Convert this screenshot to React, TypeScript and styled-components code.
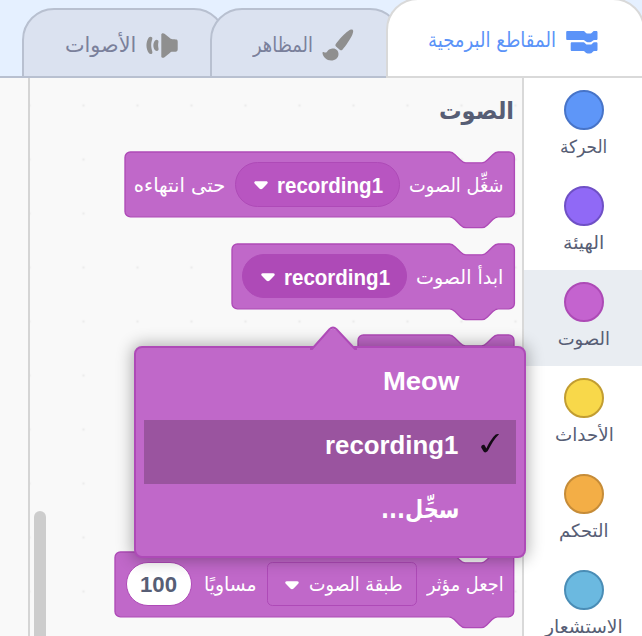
import React, { useLayoutEffect, useRef, useState } from "react";
import styled, { createGlobalStyle, css } from "styled-components";

const sans = `"Liberation Sans", "DejaVu Sans", sans-serif`;
const arabic = `"DejaVu Sans", "Liberation Sans", sans-serif`;

const GlobalStyle = createGlobalStyle`
  * { box-sizing: border-box; }
  body { margin: 0; overflow: hidden; background: #fff; font-family: ${sans}; }
`;

/* Text that is condensed or stretched to a known width */

const FitBox = styled.span<{ $w: number; $h: number; $dy: number }>`
  display: flex;
  justify-content: flex-start;
  flex: none;
  width: ${(p) => p.$w}px;
  height: ${(p) => p.$h}px;
  margin-top: ${(p) => p.$dy}px;
  overflow: visible;
`;

const FitInner = styled.span<{ $size: number; $bold?: boolean; $h: number; $latin?: boolean }>`
  flex: none;
  white-space: nowrap;
  font-family: ${(p) => (p.$latin ? sans : arabic)};
  font-size: ${(p) => p.$size}px;
  font-weight: ${(p) => (p.$bold ? 700 : 400)};
  line-height: ${(p) => p.$h}px;
  transform-origin: right center;
`;

type FitProps = {
  children: string;
  w: number;
  size: number;
  h?: number;
  dy?: number;
  bold?: boolean;
  latin?: boolean;
};

function Fit({ children, w, size, h = 30, dy = 0, bold, latin }: FitProps) {
  const ref = useRef<HTMLSpanElement>(null);
  const [scale, setScale] = useState(1);
  useLayoutEffect(() => {
    if (ref.current) setScale(w / ref.current.offsetWidth);
  }, [w, children, size]);
  return (
    <FitBox $w={w} $h={h} $dy={dy}>
      <FitInner
        ref={ref}
        dir={latin ? "ltr" : "rtl"}
        $size={size}
        $bold={bold}
        $h={h}
        $latin={latin}
        style={{ transform: `scaleX(${scale})` }}
      >
        {children}
      </FitInner>
    </FitBox>
  );
}

/* Page */

const Page = styled.div`
  direction: rtl;
  position: relative;
  display: flex;
  flex-direction: column;
  width: 642px;
  height: 636px;
  overflow: hidden;
`;

const TabBar = styled.header`
  display: flex;
  flex: none;
  align-items: flex-end;
  height: 78px;
  background: #e5f0ff;
  box-shadow: inset 0 -2px #b8c0d0;
`;

const Tab = styled.div<{ $w: number; $active?: boolean; $z: number; $start: number }>`
  position: relative;
  z-index: ${(p) => p.$z};
  display: flex;
  flex: none;
  align-items: center;
  width: ${(p) => p.$w}px;
  height: 70px;
  padding-top: 4px;
  padding-right: ${(p) => p.$start}px;
  margin-left: -16px;
  border: 2px solid #b8c0d0;
  border-radius: 32px 32px 0 0;
  background: #dbe2f0;
  color: #7a809b;
  ${(p) =>
    p.$active &&
    css`
      height: 80px;
      margin-right: -3px;
      padding-top: 8px;
      border-color: #d9d9d9;
      background: #fff;
      color: #5b93f8;
    `}
`;

const TabIcon = styled.svg`
  flex: none;
  display: block;
  overflow: visible;
`;

const Space = styled.span<{ $w: number }>`
  flex: none;
  width: ${(p) => p.$w}px;
`;

const Main = styled.main`
  display: flex;
  flex: 1;
  min-height: 0;
`;

const Categories = styled.nav`
  flex: none;
  width: 120px;
  border-left: 2px solid #d9d9d9;
  background: #fff;
`;

const Category = styled.div<{ $selected?: boolean }>`
  display: flex;
  flex-direction: column;
  align-items: center;
  height: 96px;
  padding: 12px 0 0 2px;
  background: ${(p) => (p.$selected ? "#e9edf2" : "transparent")};
  color: #575e75;
`;

const Bubble = styled.span<{ $fill: string; $line: string }>`
  flex: none;
  width: 40px;
  height: 40px;
  border: 2px solid ${(p) => p.$line};
  border-radius: 50%;
  background: ${(p) => p.$fill};
`;

const Flyout = styled.section`
  display: flex;
  flex-direction: column;
  flex: none;
  width: 494px;
  padding: 15px 8px 0 0;
  border-left: 2px solid #d5d5d5;
  color: #575e75;
  background: radial-gradient(circle at center, #ededed 0.8px, transparent 1.8px) 26.5px 0.5px / 54px 54px #f9f9f9;
`;

const Workspace = styled.section`
  flex: 1;
  background: #f9f9f9;
`;

/* Blocks */

const BlockBox = styled.div<{ $w: number; $gap: number }>`
  position: relative;
  display: flex;
  flex: none;
  align-items: center;
  width: ${(p) => p.$w}px;
  height: 64.8px;
  margin-top: ${(p) => p.$gap}px;
  padding-right: 10.5px;
  gap: 10px;
  color: #fff;
`;

const BlockShape = styled.svg`
  position: absolute;
  inset: 0;
  width: 100%;
  height: 100%;
  overflow: visible;
`;

const UNIT = 1.35;

function blockPath(width: number) {
  return (
    `M0,4 A4,4 0 0 1 4,0 H12 c2,0 3,1 4,2 l4,4 c1,1 2,2 4,2 h12 c2,0 3,-1 4,-2 l4,-4 c1,-1 2,-2 4,-2 ` +
    `H${width - 4} a4,4 0 0 1 4,4 v40 a4,4 0 0 1 -4,4 H48 ` +
    `c-2,0 -3,1 -4,2 l-4,4 c-1,1 -2,2 -4,2 h-12 c-2,0 -3,-1 -4,-2 l-4,-4 c-1,-1 -2,-2 -4,-2 H4 a4,4 0 0 1 -4,-4 z`
  );
}

function Block({ w, gap, children }: { w: number; gap: number; children?: React.ReactNode }) {
  return (
    <BlockBox $w={w} $gap={gap}>
      <BlockShape>
        <path
          transform={`translate(${w},0) scale(${-UNIT},${UNIT})`}
          d={blockPath(w / UNIT)}
          fill="#c068c9"
          stroke="#ae4ab7"
          strokeWidth="1"
        />
      </BlockShape>
      {children}
    </BlockBox>
  );
}

const Field = styled.span<{ $w: number; $kind: "round" | "open" | "square" | "number" }>`
  position: relative;
  display: flex;
  flex: none;
  align-items: center;
  gap: 10px;
  width: ${(p) => p.$w}px;
  height: 44.6px;
  padding-right: ${(p) => (p.$kind === "square" ? 13 : 15)}px;
  border: 1.35px solid #ae4ab7;
  border-radius: ${(p) => (p.$kind === "square" ? 5.4 : 23)}px;
  background: ${(p) =>
    ({ round: "#b855c1", open: "#ae4ab7", square: "transparent", number: "#fff" })[p.$kind]};
  ${(p) =>
    p.$kind === "number" &&
    css`
      margin-right: 2px;
      padding-right: 13px;
      color: #575e75;
    `}
`;

const Label = styled.span`
  position: relative;
  flex: none;
`;

const Caret = styled(TabIcon)`
  margin-top: 3px;
`;

const Arrow = () => (
  <Caret width="14" height="9" viewBox="0 0 14 9">
    <path d="M1.9 .3H12.1C13.7 .3 14.3 1.7 13.2 2.8L8.6 7.6C7.6 8.6 6.4 8.6 5.4 7.6L.8 2.8C-.3 1.7 .3 .3 1.9 .3Z" fill="#fff" />
  </Caret>
);

/* Drop-down menu */

const Popup = styled.div`
  position: absolute;
  left: 134px;
  top: 346px;
  width: 392px;
  height: 212px;
  padding: 8px;
  border: 2px solid #ae4ab7;
  border-radius: 8px;
  background: #c068c9;
  box-shadow: 0 0 16px 2px rgba(0, 0, 0, 0.3);
  color: #fff;
`;

const PopupTip = styled.svg`
  position: absolute;
  left: 174px;
  top: -22px;
`;

const Option = styled.div<{ $checked?: boolean }>`
  display: flex;
  height: 64px;
  padding: 10px 16px 0 0;
  background: ${(p) => (p.$checked ? "#9a549f" : "transparent")};
`;

const CheckSlot = styled.span`
  flex: none;
  width: 41px;
  height: 30px;
  padding-top: 3px;
`;

const Scrollbar = styled.div`
  position: absolute;
  left: 34px;
  top: 511px;
  width: 12px;
  height: 140px;
  border-radius: 6px;
  background: #cdcdcd;
`;

const categories = [
  { name: "الحركة", w: 47, fill: "#5e96f8", line: "#4774c8" },
  { name: "الهيئة", w: 41, fill: "#9069f6", line: "#6f50c6" },
  { name: "الصوت", w: 52, fill: "#c463cf", line: "#ad4ab6", selected: true },
  { name: "الأحداث", w: 59, fill: "#f8d84a", line: "#c29d31" },
  { name: "التحكم", w: 49, fill: "#f3ae46", line: "#c68c38" },
  { name: "الاستشعار", w: 78, fill: "#6bb9e0", line: "#4a8db6" },
];

export default function App() {
  return (
    <Page>
      <GlobalStyle />
      <TabBar>
        <Tab $w={259} $active $z={3} $start={45}>
          <TabIcon width="32" height="23" viewBox="0 0 32 23">
            <path
              fill="#5b93f8"
              d="M1.5 0H17c1 0 1.600.5 2.300 1.200 1 1 1.400 1.300 2.300 1.300h2.500c1 0 1.400-.4 2.300-1.300C27 .5 27.600 0 28.500 0h1.700c.8 0 1.300.5 1.300 1.300v6.400c0 .8-.5 1.300-1.300 1.300h-1.700c-.9 0-1.400.4-2.100 1.100-.8.800-1.300 1.100-2.300 1.100h-2.500c-1 0-1.500-.3-2.300-1.100C18.600 9.400 18 9 17 9H1.500C.6 9 .2 8.500.2 7.700V1.300C.2.500.6 0 1.500 0Z"
            />
            <path
              fill="#5b93f8"
              d="M6 11.300h11c1 0 1.600.4 2.300 1.100.8.800 1.400 1.200 2.300 1.200h2.500c1 0 1.500-.4 2.300-1.200.7-.7 1.200-1.100 2.100-1.100h1.700c.8 0 1.300.5 1.300 1.300v6.200c0 .8-.5 1.300-1.300 1.300h-1.700c-.9 0-1.400.4-2.100 1.100-.8.800-1.300 1.200-2.300 1.200h-2.500c-1 0-1.500-.4-2.300-1.200-.7-.7-1.300-1.100-2.300-1.100H6c-.9 0-1.300-.5-1.300-1.300v-6.200c0-.8.4-1.300 1.300-1.300Z"
            />
          </TabIcon>
          <Space $w={10} />
          <Fit w={128} size={20.5} dy={-4}>المقاطع البرمجية</Fit>
        </Tab>
        <Tab $w={192} $z={2} $start={46}>
          <TabIcon width="32" height="32" viewBox="0 0 32 32">
            <path
              fill="#8f8f8f"
              d="M30.600.8c.9.700.7 2.500-.2 4.600-1.800 4.200-6.300 11-10 15.300-.7.800-1.600.9-2.400.2l-4-3.500c-.8-.7-.8-1.500-.2-2.400C17 10.400 22.500 4.400 26.300 1.900 28.200.6 29.800.2 30.600.8Z"
            />
            <path
              fill="#8f8f8f"
              d="M10.300 19.500c3.500-.5 6.200 2 6.200 5.400 0 3.900-3.200 6.500-7.400 6.500-4.400 0-8-3.200-8.600-7.200-.1-1 .6-1.400 1.500-1 1.200.6 2.200.5 3-.5 1.200-1.600 2.500-2.900 5.300-3.200Z"
            />
          </TabIcon>
          <Space $w={9} />
          <Fit w={60} size={20.5} dy={-1}>المظاهر</Fit>
        </Tab>
        <Tab $w={204} $z={1} $start={45}>
          <TabIcon width="32" height="25" viewBox="0 0 32 25">
            <path
              fill="#8f8f8f"
              d="M14.300 1.600c0-1.400 1.900-2 3.200-.9l5 4.100c1.200 1 1.700 1.300 3 1.400 1.500.1 3 .1 4 .4 1 .3 1.200 1.300 1.200 2.300v7.200c0 1-.2 2-1.200 2.300-1 .3-2.500.3-4 .4-1.300.1-1.800.4-3 1.400l-5 4.100c-1.300 1.100-3.200.5-3.200-.9Z"
            />
            <path
              fill="#8f8f8f"
              d="M10.900 7.300c1.200 1 .2 2.500.2 5s1 4 .2 5c-.8 1.100-2.300.8-3.200-.1C5.800 14.700 5.800 9.900 8.100 7.400c.8-.9 2-.9 2.800-.1ZM4.900 4.200c1.300 1.200-.7 3.500-.7 8.100s2 6.900.9 8.200c-1 1.100-2.500.6-3.300-.5-3.100-4.500-3.100-10.900 0-15.400.8-1.100 2.100-1.300 3.100-.4Z"
            />
          </TabIcon>
          <Space $w={11} />
          <Fit w={71} size={20.5} dy={-1}>الأصوات</Fit>
        </Tab>
      </TabBar>

      <Main>
        <Categories>
          {categories.map((c) => (
            <Category key={c.name} $selected={c.selected}>
              <Bubble $fill={c.fill} $line={c.line} />
              <Fit w={c.w} size={18} h={30} dy={2}>{c.name}</Fit>
            </Category>
          ))}
        </Categories>

        <Flyout>
          <Fit w={75} size={24} h={36} bold>الصوت</Fit>
          <Block w={389.4} gap={22.9}>
            <Label><Fit w={94} size={19.5} dy={3}>شغِّل الصوت</Fit></Label>
            <Field $w={164.3} $kind="round">
              <Fit w={106} size={21.3} dy={3} latin bold>recording1</Fit>
              <Arrow />
            </Field>
            <Label><Fit w={91} size={19.5} dy={3}>حتى انتهاءه</Fit></Label>
          </Block>
          <Block w={282.4} gap={27}>
            <Label><Fit w={87} size={19.5} dy={3}>ابدأ الصوت</Fit></Label>
            <Field $w={164.3} $kind="open">
              <Fit w={106} size={21.3} dy={3} latin bold>recording1</Fit>
              <Arrow />
            </Field>
          </Block>
          <Block w={156} gap={27} />
          <Block w={320} gap={59.6} />
          <Block w={398.7} gap={27}>
            <Label><Fit w={77} size={19.5} dy={2}>اجعل مؤثر</Fit></Label>
            <Field $w={150} $kind="square">
              <Fit w={94} size={19.5} dy={2}>طبقة الصوت</Fit>
              <Arrow />
            </Field>
            <Label><Fit w={53} size={19.5} dy={2}>مساويًا</Fit></Label>
            <Field $w={65.5} $kind="number">
              <Fit w={37} size={21.6} dy={2} latin bold>100</Fit>
            </Field>
          </Block>
        </Flyout>

        <Workspace />
      </Main>

      <Scrollbar />

      <Popup>
        <PopupTip width="48" height="24" viewBox="0 0 48 24">
          <path d="M1 24 L2.500 22.500 19.500 4.300 Q23 1 26.500 4.300 L44.500 22.500 46 24Z" fill="#c068c9" />
          <path d="M0 23 H2 L19.500 3.300 Q23 0 26.500 3.300 L45 23 H47" fill="none" stroke="#ae4ab7" strokeWidth="2" />
        </PopupTip>
        <Option>
          <CheckSlot />
          <Fit w={76} size={26} latin bold>Meow</Fit>
        </Option>
        <Option $checked>
          <CheckSlot>
            <TabIcon width="20" height="22" viewBox="0 0 20 22">
              <path d="M1.200 14.500C.8 12.700 3.500 11 4.600 12.300 5.300 13.200 5.700 14.400 6.300 15.600 9 10 12.500 4.300 15.700 1.600 16.500 1 18.300.8 19 1.200 14.500 5.600 11 11.500 8 17.600 7.300 19.200 4.300 20.200 3.600 18.600Z" fill="#140a16" />
            </TabIcon>
          </CheckSlot>
          <Space $w={1} />
          <Fit w={133} size={26} latin bold>recording1</Fit>
        </Option>
        <Option>
          <CheckSlot />
          <Fit w={78} size={25} dy={1} bold>سجِّل...</Fit>
        </Option>
      </Popup>
    </Page>
  );
}
